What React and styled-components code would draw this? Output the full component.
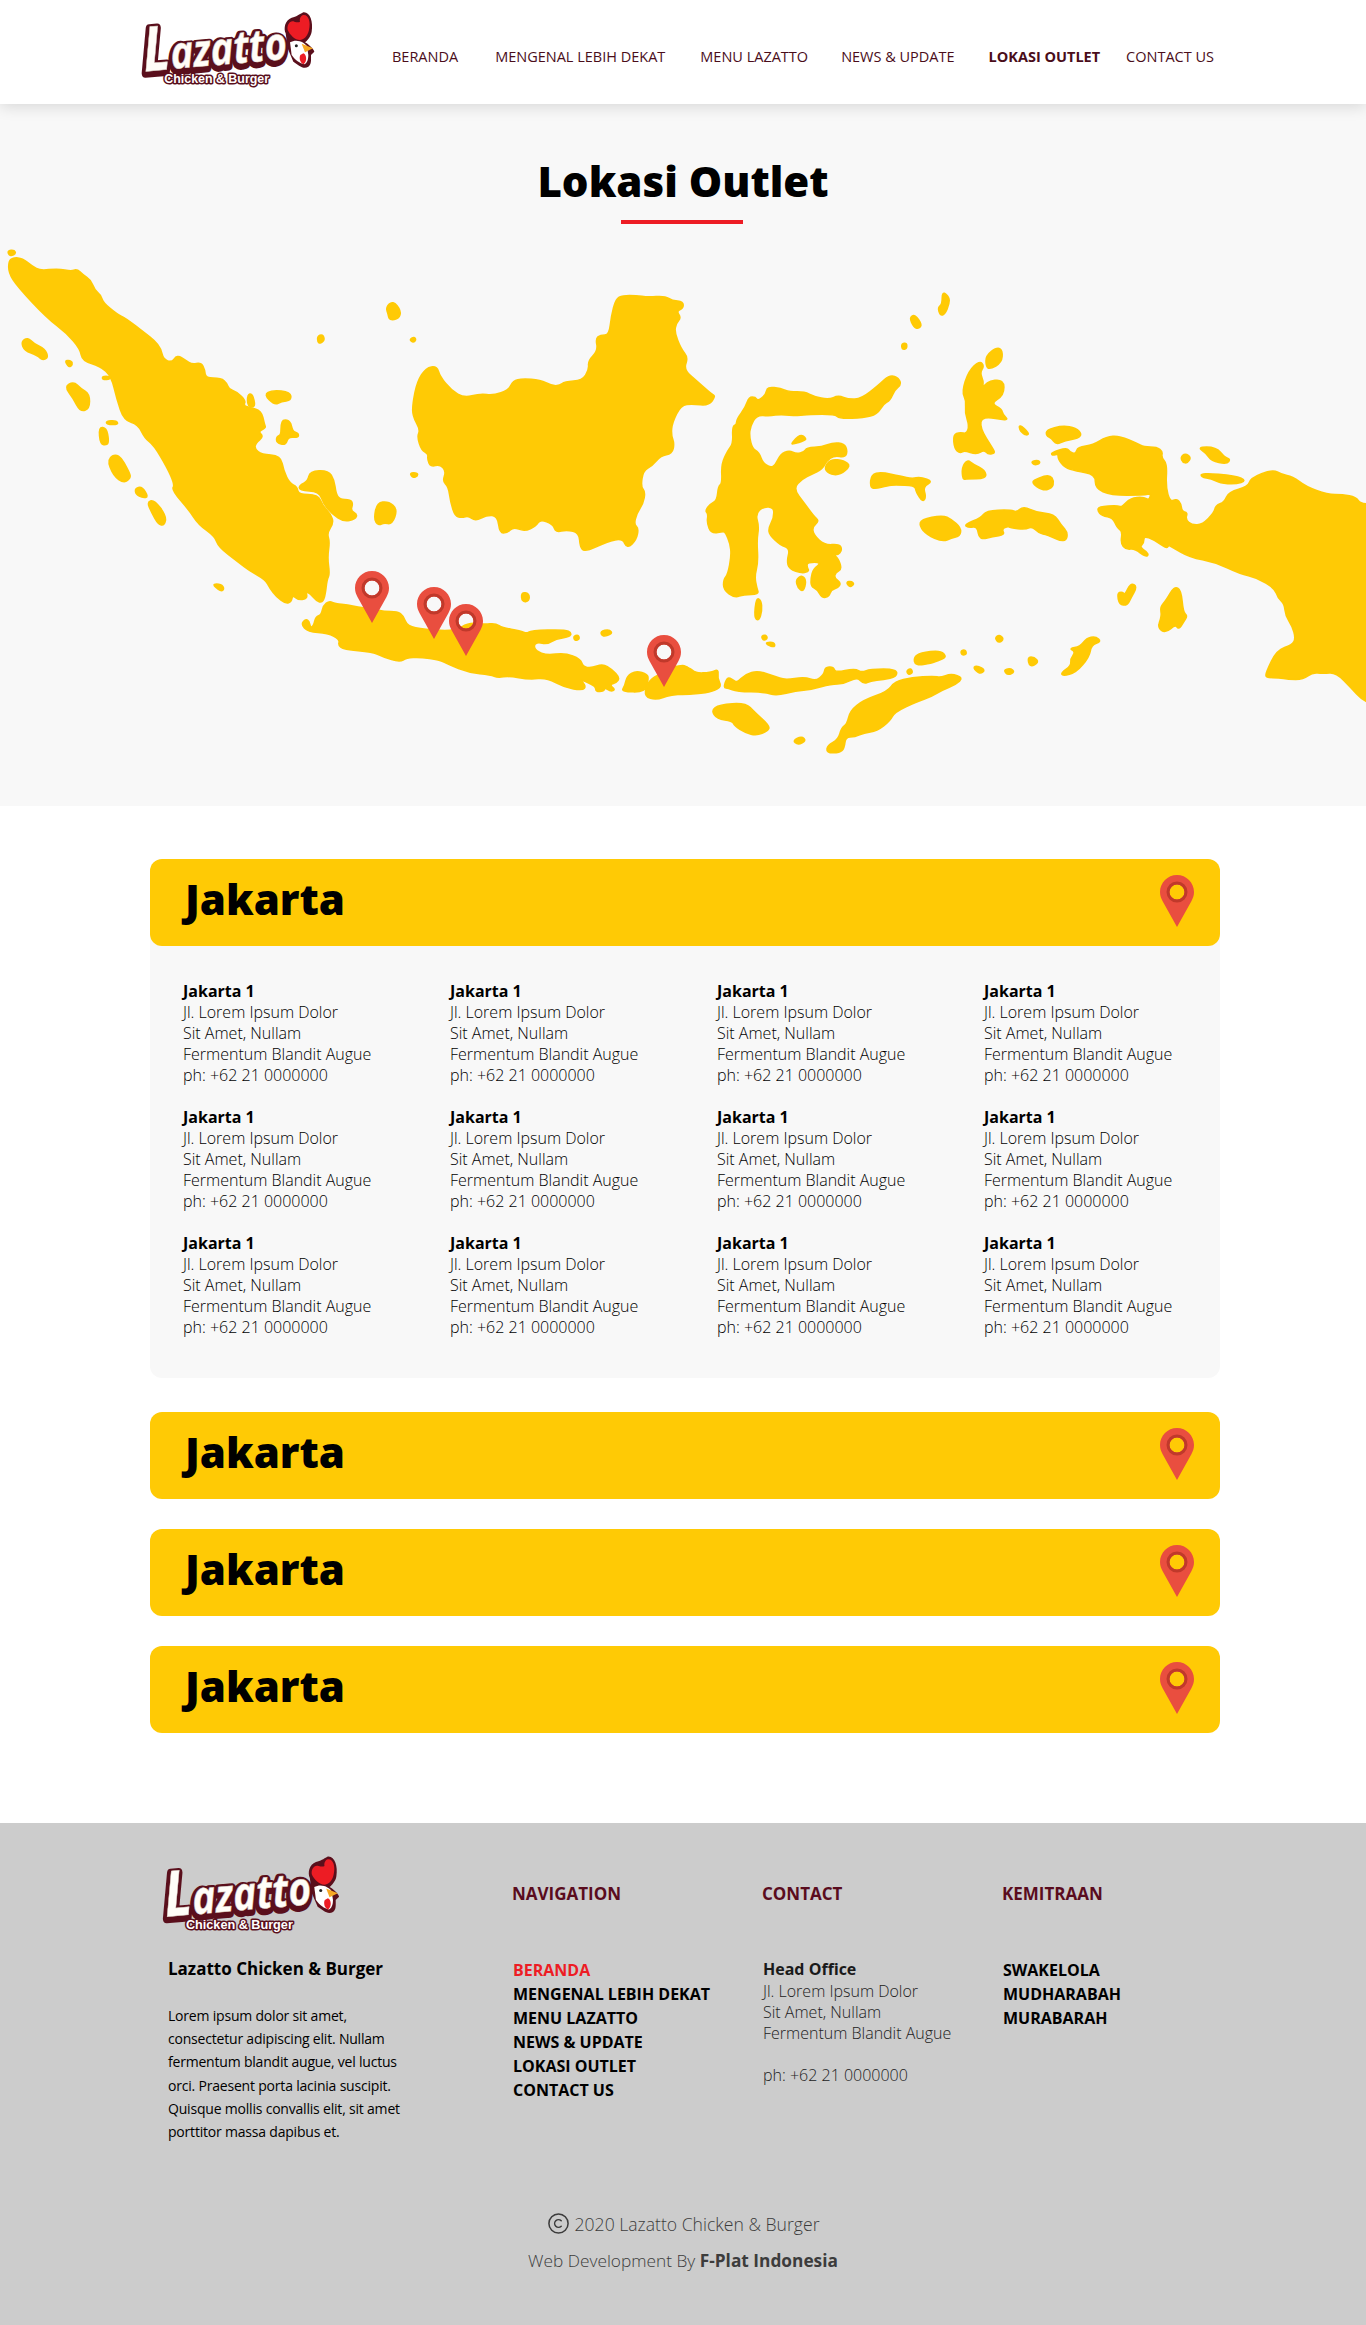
import React from 'react'
import styled, { createGlobalStyle } from 'styled-components'
import { Copyright } from 'lucide-react'

const GlobalStyle = createGlobalStyle`
  body {
    margin: 0;
    background: #fff;
    color: #000;
    font-family: "Open Sans", "Liberation Sans", sans-serif;
  }
  * { box-sizing: border-box; }
`

const YELLOW = '#ffca05'

// island outlines, traced from the map, in two local coordinate systems
const westIslands = [
  '20 90 30 80 50 82 72 105 90 118 130 112 160 120 172 113 185 130 203 145 212 175 226 190 230 210 262 245 280 255 325 300 345 320 360 345 365 375 385 385 397 363 415 378 430 390 450 385 458 405 460 430 495 430 508 445 512 462 530 470 550 495 545 510 558 515 585 525 592 565 595 575 578 585 590 600 572 620 570 635 585 652 628 655 635 700 648 735 665 745 668 768 712 768 722 800 740 825 747 850 732 880 738 905 733 950 738 1000 732 1015 728 1060 722 1082 710 1078 695 1055 685 1050 688 1070 670 1075 655 1060 652 1080 640 1085 620 1065 605 1040 595 1015 560 990 535 965 490 920 482 890 445 855 425 815 385 755 392 740 375 690 345 625 325 605 310 565 278 552 262 490 250 425 225 395 185 380 180 345 150 300 105 255 40 165 20 125',
  '690 730 695 700 735 698 748 725 752 765 760 782 785 783 790 795 785 815 800 825 795 840 770 847 745 825 725 795 716 760 670 756 672 740',
  '675 1145 685 1130 692 1135 695 1155 703 1150 708 1122 720 1118 725 1090 738 1077 750 1085 780 1088 800 1095 835 1100 860 1108 890 1108 903 1120 912 1150 950 1160 1020 1165 1050 1140 1085 1145 1110 1142 1125 1155 1165 1163 1180 1172 1190 1163 1265 1160 1280 1170 1275 1182 1245 1187 1225 1203 1205 1197 1195 1205 1200 1222 1225 1235 1265 1228 1300 1245 1305 1268 1325 1272 1350 1260 1370 1275 1388 1300 1380 1315 1365 1320 1378 1335 1368 1340 1355 1328 1352 1340 1335 1340 1335 1325 1310 1310 1300 1305 1312 1325 1305 1337 1265 1328 1225 1300 1185 1305 1140 1295 1115 1300 1100 1292 1050 1285 1005 1262 985 1248 940 1240 910 1243 895 1255 860 1240 835 1225 770 1218 758 1205 762 1190 735 1170 690 1167',
  '1392 1340 1400 1325 1405 1295 1425 1280 1450 1290 1452 1305 1445 1342',
  '1445 1355 1448 1322 1465 1296 1500 1280 1525 1263 1540 1268 1550 1285 1568 1285 1568 1345 1500 1350 1470 1365',
  '925 505 935 440 955 400 978 395 985 425 1010 465 1040 488 1075 475 1105 480 1140 465 1150 437 1170 432 1210 435 1235 452 1255 452 1265 440 1305 437 1320 405 1318 380 1340 350 1335 315 1345 305 1365 305 1370 250 1380 200 1395 190 1425 190 1450 195 1490 192 1505 205 1530 208 1530 228 1515 235 1525 255 1515 270 1510 295 1525 345 1541 370 1531 405 1562 440 1592 475 1603 482 1587 510 1552 505 1525 508 1505 560 1503 595 1510 620 1505 650 1480 655 1460 685 1440 700 1435 745 1445 760 1440 795 1425 825 1420 855 1430 865 1425 900 1405 925 1395 895 1360 905 1310 935 1300 920 1298 880 1270 870 1245 878 1240 855 1210 840 1200 860 1175 875 1150 862 1135 880 1120 880 1115 830 1090 828 1065 845 1050 830 1035 835 1020 832 1010 790 1005 745 992 730 1000 700 985 680 965 688 958 665 960 650 945 640 935 600 942 580 925 540',
  '17 60 32 58 35 70 22 76',
  '48 325 62 312 75 330 100 345 108 370 95 378 85 365 55 350',
  '145 378 160 380 162 390 155 400',
  '230 425 245 425 247 433 230 435',
  '145 455 165 440 180 460 200 475 200 520 180 527 165 490',
  '238 555 260 553 265 565 240 565',
  '222 572 238 575 243 610 240 625 225 622',
  '240 665 265 647 290 705 292 720 278 735 255 715',
  '303 750 318 745 332 775 320 778 305 768',
  '330 790 345 783 372 830 368 858 355 855 340 820',
  '475 1028 495 1028 502 1042 495 1050',
  '592 478 610 465 650 470 652 495 630 498 615 508',
  '555 478 565 475 572 515 555 512',
  '635 550 650 555 655 585 668 590 668 603 645 600 640 625 620 618 620 600 630 595 630 565',
  '845 792 870 788 890 810 878 855 860 850 848 858 838 840',
  '865 225 880 205 898 235 893 258 873 262 870 245',
  '712 308 722 303 727 318 718 330 712 325',
  '918 318 928 310 932 320 925 327',
  '918 705 935 705 935 715 925 720',
  '1168 1052 1185 1055 1185 1078 1170 1080',
  '1345 1165 1365 1160 1372 1172 1350 1182',
  '1285 1180 1295 1175 1298 1188 1288 1193',
]

const eastIslands = [
  '130 550 150 515 158 485 172 485 178 497 197 478 200 455 230 460 250 470 285 470 305 483 340 493 362 480 385 492 415 490 455 450 480 420 500 430 505 450 490 465 480 495 465 505 450 535 420 545 365 548 355 535 295 535 270 540 230 535 205 540 175 537 160 570 158 600 165 635 180 645 190 680 215 692 230 650 250 640 265 650 285 645 290 632 325 630 350 617 375 620 382 640 378 660 352 655 335 670 325 695 300 710 280 722 258 750 285 795 305 830 318 845 302 862 305 885 330 915 365 912 370 930 360 945 345 940 360 950 370 985 355 995 352 1010 368 1025 360 1040 345 1045 340 1065 325 1068 315 1045 300 1035 300 1010 305 985 325 965 290 965 290 980 295 990 280 997 250 985 245 960 252 925 230 915 205 885 203 865 215 835 215 805 190 803 172 825 180 860 175 900 178 965 170 1005 175 1040 180 1058 145 1058 125 1068 100 1045 100 1015 110 1000 118 945 115 910 105 880 100 875 72 882 62 850 65 825 58 815 70 795 85 785 88 745 97 735 95 680 110 640 122 620 120 570 130 565',
  '330 690 345 665 375 670 390 685 365 712 340 708',
  '255 620 275 592 288 605 285 612 258 622',
  '265 1015 280 1002 288 1020 282 1050 270 1040',
  '380 1022 392 1020 398 1028 388 1038',
  '175 1068 185 1075 187 1105 180 1135 170 1125',
  '186 1180 195 1175 200 1185 192 1193',
  '197 1197 215 1197 217 1212 200 1205',
  '600 178 615 195 615 215 605 245 595 248 590 225 600 215',
  '525 255 537 245 553 275 545 287 535 282',
  '507 330 518 328 518 345 508 347',
  '700 365 725 340 737 350 735 385 708 405 700 395',
  '645 470 660 410 685 380 695 395 685 415 695 445 685 480 700 440 740 433 740 480 710 503 735 520 737 535 753 555 690 540 685 575 715 635 720 648 705 652 695 638 678 652 650 640 640 648 628 635 625 595 640 587 655 592 662 570 652 530 655 495',
  '775 563 798 590 793 597 778 585',
  '645 690 657 667 670 680 697 697 700 722 655 722 647 725',
  '438 710 460 703 505 715 530 722 550 717 578 730 555 745 562 775 555 790 540 760 538 742 490 740 475 742 445 752 435 745',
  '552 840 600 828 620 840 642 865 640 888 620 895 600 905 565 885 548 860',
  '650 855 690 835 700 815 755 812 770 820 785 802 815 820 855 825 870 855 887 880 880 908 840 885 820 880 805 860 790 870 755 865 750 860 735 868 742 885 715 890 685 900 680 860 660 865',
  '803 672 820 668 823 678 810 683',
  '802 733 820 720 845 710 855 730 850 750 830 757',
  '838 580 875 568 905 575 918 592 910 605 880 612 860 623 850 605 838 598',
  '850 645 885 632 890 645 905 650 910 630 945 625 975 600 1005 598 1045 620 1060 630 1090 630 1103 643 1100 660 1113 680 1110 745 1120 790 1135 780 1145 795 1147 818 1160 820 1155 840 1170 857 1195 855 1222 820 1225 800 1245 790 1255 760 1300 745 1305 720 1355 695 1375 710 1400 715 1430 745 1480 768 1515 768 1545 775 1555 795 1590 795 1590 1380 1560 1365 1535 1330 1500 1285 1470 1288 1445 1285 1425 1305 1390 1305 1370 1300 1340 1300 1340 1285 1365 1220 1400 1205 1408 1185 1400 1150 1385 1120 1382 1085 1368 1070 1360 1040 1320 1010 1280 998 1225 965 1165 950 1125 920 1117 915 1112 925 1085 900 1060 888 1060 910 1050 920 1072 940 1065 950 1040 925 1020 928 1008 910 1012 875 1000 865 990 835 965 830 955 815 958 803 1000 800 1010 805 1030 778 1060 775 1072 785 1078 765 1060 770 985 770 950 750 950 710 905 700 880 690 865 665 865 650 850 655',
  '1183 630 1225 630 1245 660 1258 665 1250 680 1215 670 1205 650',
  '1145 660 1155 648 1168 660 1160 677 1150 675',
  '1192 705 1270 713 1295 728 1270 738 1235 735 1215 722 1192 718',
  '1000 1055 1010 1050 1018 1060 1030 1025 1045 1035 1030 1070 1022 1090 1005 1088',
  '1130 1035 1145 1045 1150 1110 1160 1120 1150 1140 1140 1160 1133 1145 1110 1170 1092 1155 1102 1120 1098 1095 1112 1075',
  '890 1215 915 1210 930 1185 950 1180 963 1195 940 1205 935 1240 905 1285 875 1295 872 1285 895 1265 893 1245 905 1225',
  '795 1240 810 1240 820 1255 800 1270',
  '720 1185 730 1175 740 1187 730 1200',
  '642 1222 652 1218 655 1232 645 1235',
  '670 1270 680 1265 698 1278 685 1290',
  '740 1278 755 1272 765 1283 750 1293',
  '535 1240 550 1228 595 1220 610 1240 590 1250 575 1258 538 1265',
  '518 1280 527 1272 532 1285 523 1292',
  '335 1518 338 1495 362 1480 370 1445 382 1435 390 1395 420 1365 475 1340 492 1310 530 1300 580 1295 595 1300 620 1288 647 1300 630 1320 600 1335 575 1355 540 1370 490 1400 480 1425 450 1455 420 1460 400 1472 378 1472 375 1505 365 1518',
  '72 1395 90 1378 150 1373 170 1400 205 1440 200 1455 175 1468 150 1460 125 1440 120 1425 85 1420',
  '258 1483 278 1470 288 1483 270 1495',
  '100 1330 108 1298 120 1305 130 1315 150 1290 178 1280 215 1295 240 1307 285 1297 310 1310 330 1290 332 1270 350 1268 355 1285 400 1273 415 1285 435 1275 495 1275 495 1298 465 1305 435 1310 420 1318 405 1298 375 1318 345 1318 300 1335 265 1338 220 1352 195 1342 130 1340 110 1330',
  '-30 1265 20 1268 35 1287 70 1285 88 1275 85 1303 95 1325 75 1340 40 1347 -30 1350',
]

// rounds a closed outline with quadratic curves through the edge midpoints
const smoothPath = (outline) => {
  const n = outline.trim().split(/\s+/).map(Number)
  const pts = []
  for (let i = 0; i < n.length; i += 2) pts.push([n[i], n[i + 1]])
  const mid = (a, b) => `${(a[0] + b[0]) / 2} ${(a[1] + b[1]) / 2}`
  let d = `M${mid(pts[pts.length - 1], pts[0])}`
  pts.forEach((p, i) => {
    d += `Q${p[0]} ${p[1]} ${mid(p, pts[(i + 1) % pts.length])}`
  })
  return d + 'Z'
}

const pinOutline = 'M17 0C7.6 0 0 7.6 0 17C0 20.5 1 23 2.5 26L17 52L31.5 26C33 23 34 20.5 34 17C34 7.6 26.4 0 17 0ZM17 9.5A7.5 7.5 0 1 1 17 24.5A7.5 7.5 0 1 1 17 9.5Z'

const PinShape = () => (
  <>
    <path d={pinOutline} fill="#e94e3f" fillRule="evenodd" />
    <circle cx="17" cy="17" r="9" fill="none" stroke="#c0392b" strokeWidth="3" />
  </>
)

const Header = styled.header`
  position: relative;
  z-index: 2;
  height: 104px;
  background: #fff;
  box-shadow: 0 3px 14px rgba(0, 0, 0, 0.13);
  display: flex;
  align-items: center;
  padding: 0 0 4px 135px;
`

const LogoSvg = styled.svg`
  display: block;
  flex: none;
  overflow: visible;
  width: ${(p) => p.$width}px;
  height: ${(p) => p.$width * 90 / 190}px;
`

const Nav = styled.nav`
  display: flex;
  margin: 14px 0 0 67px;
`

const NavItem = styled.a`
  margin-left: ${(p) => p.$gap}px;
  font-size: 14.5px;
  line-height: 24px;
  color: #4a0d1a;
  font-weight: ${(p) => (p.$active ? 700 : 400)};
  white-space: nowrap;
`

const Hero = styled.section`
  background: #f8f8f8;
  padding-top: 49px;
  height: 702px;
`

const PageTitle = styled.h1`
  margin: 0;
  font-size: 42px;
  line-height: 56px;
  font-weight: 800;
  text-align: center;
`

const TitleRule = styled.div`
  width: 122px;
  height: 4px;
  margin: 11px 0 6px 621px;
  background: #ed1c24;
`

const MapSvg = styled.svg`
  display: block;
  width: 1366px;
  height: 576px;
`

const Main = styled.main`
  width: 1070px;
  margin-left: 150px;
  padding: 53px 0 90px;
`

const Panel = styled.div`
  position: relative;
  height: 87px;
  margin-top: ${(p) => p.$gap}px;
  padding: 0 16px 0 35px;
  background: ${YELLOW};
  border-radius: 12px;
  display: flex;
  align-items: center;
  justify-content: space-between;
`

const PanelTitle = styled.h2`
  margin: 0 0 8px;
  font-size: 42px;
  line-height: 60px;
  font-weight: 800;
`

const PanelPin = styled.svg`
  display: block;
  width: 34px;
  height: 52px;
  margin: 0 10px 3px 0;
`

const PanelBody = styled.div`
  background: #f8f8f8;
  border-radius: 0 0 12px 12px;
  padding: 46px 0 0 33px;
  height: 444px;
  margin-top: -12px;
  display: grid;
  grid-template-columns: repeat(4, 267px);
  align-content: start;
`

const Outlet = styled.div`
  font-size: 16px;
  line-height: 21px;
  font-weight: 300;
  color: #000;
  margin-bottom: 20px;
`

const OutletName = styled.div`
  font-weight: 700;
  line-height: 22px;
`

const Footer = styled.footer`
  background: #ccc;
  height: 502px;
  padding: 26px 0 0 168px;
`

const FooterColumns = styled.div`
  display: grid;
  grid-template-columns: 345px 250px 240px 1fr;
`

const FooterLogo = styled.div`
  margin-left: -12px;
  height: 92px;
`

const BrandName = styled.div`
  margin-top: 16px;
  font-size: 17px;
  line-height: 24px;
  font-weight: 700;
`

const BrandText = styled.p`
  margin: 23px 0 0;
  width: 245px;
  font-size: 14px;
  line-height: 23.2px;
  letter-spacing: -0.2px;
  color: #000;
`

const FooterColumn = styled.div`
  padding-top: 33px;
`

const ColumnHeading = styled.h3`
  margin: 0 0 52px -1px;
  font-size: 17px;
  line-height: 24px;
  font-weight: 700;
  color: #5a0c1e;
`

const LinkItem = styled.a`
  display: block;
  font-size: 16px;
  line-height: 24px;
  font-weight: 700;
  color: ${(p) => (p.$active ? '#ed1c24' : '#000')};
`

const ContactName = styled.div`
  font-size: 16px;
  line-height: 23px;
  font-weight: 700;
  color: #1a1a1a;
`

const ContactLine = styled.div`
  font-size: 16px;
  line-height: 21px;
  font-weight: 300;
  color: #222;
  margin-top: ${(p) => p.$gap || 0}px;
`

const Credits = styled.div`
  margin-top: 62px;
  margin-left: -168px;
  color: #3c3c3c;
  font-weight: 300;
  text-align: center;
`

const CreditLine = styled.div`
  display: flex;
  justify-content: center;
  align-items: center;
  gap: 5px;
  height: 37px;
  font-size: ${(p) => p.$size}px;
`

const CreditBold = styled.b`
  font-weight: 700;
`

const Logo = ({ width }) => (
  <LogoSvg $width={width} viewBox="0 0 570 270">
    <g transform="rotate(-5 250 180)">
      <text x="26" y="186" fontFamily="Open Sans" fontSize="136" fontWeight="700" fontStyle="italic" textLength="432" lengthAdjust="spacingAndGlyphs" fill="#5a0f1c" stroke="#5a0f1c" strokeWidth="26" strokeLinejoin="round"><tspan fontSize="186">L</tspan>azatto</text>
      <text x="28" y="180" fontFamily="Open Sans" fontSize="136" fontWeight="700" fontStyle="italic" textLength="432" lengthAdjust="spacingAndGlyphs" fill="#fffdf8" stroke="#d9cfc4" strokeWidth="1.5" strokeLinejoin="round"><tspan fontSize="186">L</tspan>azatto</text>
    </g>
    <path d="M505 22C525 20 535 50 530 80C528 95 515 108 510 112C520 118 535 130 538 140L528 150C528 165 530 178 520 185C505 195 490 180 475 170L458 130L452 85C445 70 450 45 470 38C485 35 490 30 505 22Z" fill="#5a0f1c" />
    <path d="M465 112C485 100 510 112 516 125L520 150C520 165 515 175 508 178C495 175 480 165 470 150Z" fill="#fff" />
    <path d="M505 30C520 28 528 50 522 75C518 95 505 105 495 105C480 105 465 90 458 75C455 60 465 45 478 50C485 52 492 52 495 50C493 40 498 32 505 30Z" fill="#ed1c24" />
    <path d="M500 116L534 130L510 142Z" fill="#f7a823" />
    <path d="M505 145C516 150 516 170 506 178C496 175 491 160 496 150Z" fill="#ed1c24" />
    <circle cx="484" cy="122" r="4.5" fill="#222" />
    <text x="88" y="234" fontFamily="Liberation Sans" fontSize="36" fontWeight="700" textLength="314" lengthAdjust="spacingAndGlyphs" fill="#fff" stroke="#5a0f1c" strokeWidth="9" paintOrder="stroke" strokeLinejoin="round">Chicken &amp; Burger</text>
  </LogoSvg>
)

const IndonesiaMap = () => (
  <MapSvg viewBox="0 230 1366 576">
    <g transform="translate(0 230) scale(0.4464 0.3444)" fill={YELLOW} stroke={YELLOW} strokeWidth="4.5">
      {westIslands.map((o) => <path key={o} d={smoothPath(o)} />)}
    </g>
    <g transform="translate(680 230) scale(0.4374 0.3444)" fill={YELLOW} stroke={YELLOW} strokeWidth="4.5">
      {eastIslands.map((o) => <path key={o} d={smoothPath(o)} />)}
    </g>
    {[[355, 571], [417, 587], [449, 604], [647, 635]].map(([x, y]) => (
      <g key={x} transform={`translate(${x} ${y})`}><PinShape /></g>
    ))}
  </MapSvg>
)

const navItems = [
  { label: 'BERANDA', gap: 0 },
  { label: 'MENGENAL LEBIH DEKAT', gap: 37 },
  { label: 'MENU LAZATTO', gap: 35 },
  { label: 'NEWS & UPDATE', gap: 33 },
  { label: 'LOKASI OUTLET', gap: 34, active: true },
  { label: 'CONTACT US', gap: 26 },
]

const footerLinks = ['BERANDA', 'MENGENAL LEBIH DEKAT', 'MENU LAZATTO', 'NEWS & UPDATE', 'LOKASI OUTLET', 'CONTACT US']

const outlets = Array.from({ length: 12 }, (_, i) => i)

const CityPanel = ({ gap }) => (
  <Panel $gap={gap}>
    <PanelTitle>Jakarta</PanelTitle>
    <PanelPin viewBox="0 0 34 52"><PinShape /></PanelPin>
  </Panel>
)

const App = () => (
  <>
    <GlobalStyle />
    <Header>
      <Logo width={190} />
      <Nav>
        {navItems.map((item) => (
          <NavItem key={item.label} $gap={item.gap} $active={item.active}>{item.label}</NavItem>
        ))}
      </Nav>
    </Header>

    <Hero>
      <PageTitle>Lokasi Outlet</PageTitle>
      <TitleRule />
      <IndonesiaMap />
    </Hero>

    <Main>
      <CityPanel gap={0} />
      <PanelBody>
        {outlets.map((i) => (
          <Outlet key={i}>
            <OutletName>Jakarta 1</OutletName>
            Jl. Lorem Ipsum Dolor<br />
            Sit Amet, Nullam<br />
            Fermentum Blandit Augue<br />
            ph: +62 21 0000000
          </Outlet>
        ))}
      </PanelBody>
      <CityPanel gap={34} />
      <CityPanel gap={30} />
      <CityPanel gap={30} />
    </Main>

    <Footer>
      <FooterColumns>
        <div>
          <FooterLogo><Logo width={194} /></FooterLogo>
          <BrandName>Lazatto Chicken &amp; Burger</BrandName>
          <BrandText>
            Lorem ipsum dolor sit amet, consectetur adipiscing elit. Nullam fermentum blandit augue, vel luctus orci. Praesent porta lacinia suscipit. Quisque mollis convallis elit, sit amet porttitor massa dapibus et.
          </BrandText>
        </div>
        <FooterColumn>
          <ColumnHeading>NAVIGATION</ColumnHeading>
          {footerLinks.map((l, i) => <LinkItem key={l} $active={i === 0}>{l}</LinkItem>)}
        </FooterColumn>
        <FooterColumn>
          <ColumnHeading>CONTACT</ColumnHeading>
          <ContactName>Head Office</ContactName>
          <ContactLine>Jl. Lorem Ipsum Dolor</ContactLine>
          <ContactLine>Sit Amet, Nullam</ContactLine>
          <ContactLine>Fermentum Blandit Augue</ContactLine>
          <ContactLine $gap={21}>ph: +62 21 0000000</ContactLine>
        </FooterColumn>
        <FooterColumn>
          <ColumnHeading>KEMITRAAN</ColumnHeading>
          <LinkItem>SWAKELOLA</LinkItem>
          <LinkItem>MUDHARABAH</LinkItem>
          <LinkItem>MURABARAH</LinkItem>
        </FooterColumn>
      </FooterColumns>
      <Credits>
        <CreditLine $size={17.6}><Copyright size={23} strokeWidth={1.6} /> 2020 Lazatto Chicken &amp; Burger</CreditLine>
        <CreditLine $size={17.3}>
          <span>Web Development By <CreditBold>F-Plat Indonesia</CreditBold></span>
        </CreditLine>
      </Credits>
    </Footer>
  </>
)

export default App
